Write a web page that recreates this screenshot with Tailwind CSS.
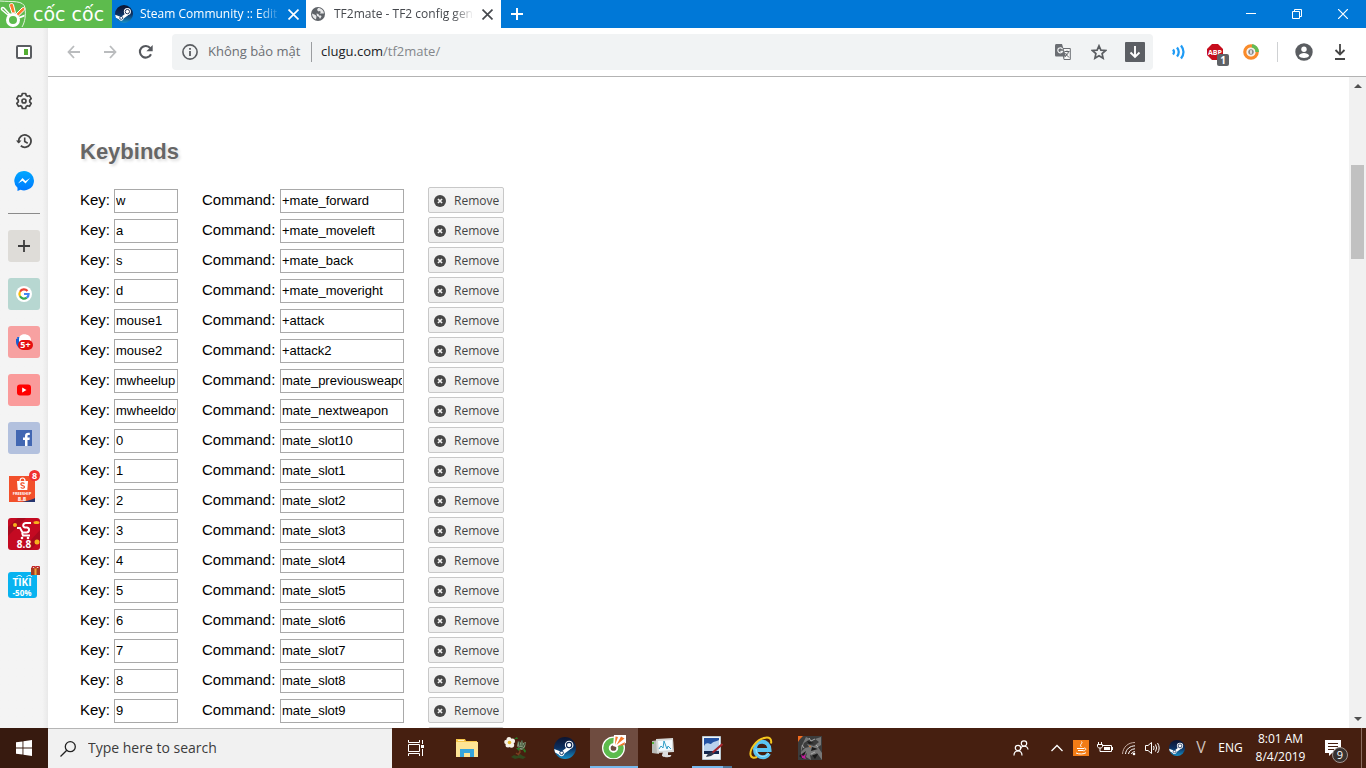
<!DOCTYPE html>
<html lang="en">
<head>
    <meta charset="UTF-8">
    <meta name="viewport" content="width=device-width, initial-scale=1.0">
    <title>TF2mate - TF2 config generator</title>
    <script src="https://cdn.jsdelivr.net/npm/@tailwindcss/browser@4"></script>
</head>
<body class="h-screen flex flex-col overflow-hidden bg-white font-['Open_Sans',sans-serif] text-xs">
    <!-- Shared icons -->
    <svg class="absolute w-0 h-0">
        <defs>
            <linearGradient id="steamBg" x1="0" y1="0" x2="0" y2="1">
                <stop offset="0" stop-color="#0c1430"/><stop offset=".5" stop-color="#0d2f5f"/><stop offset="1" stop-color="#1590c8"/>
            </linearGradient>
            <linearGradient id="msgBg" x1="0" y1="0" x2="0" y2="1">
                <stop offset="0" stop-color="#00a8ff"/><stop offset="1" stop-color="#0078ff"/>
            </linearGradient>
            <symbol id="steam" viewBox="0 0 24 24">
                <circle cx="12" cy="12" r="12" fill="url(#steamBg)"/>
                <path d="M.2 13 8 16l6.500-5 3 2.500-6 4.500a3.300 3.300 0 0 1-6.300 1L1.200 17z" fill="#fff"/>
                <circle cx="8.300" cy="17.200" r="2" fill="none" stroke="#0d2f5f"/>
                <circle cx="16.500" cy="8.800" r="4.700" fill="#fff"/>
                <circle cx="16.500" cy="8.800" r="2.900" fill="#fff" stroke="#0d2550" stroke-width="1.200"/>
            </symbol>
            <symbol id="close" viewBox="0 0 10 10">
                <path d="M.5.5l9 9M9.500.5l-9 9" stroke="currentColor" stroke-width="1.500"/>
            </symbol>
            <symbol id="remove" viewBox="0 0 12 12">
                <circle cx="6" cy="6" r="6" fill="#484848"/>
                <path d="M4 4l4 4M8 4L4 8" stroke="#f4f4f4" stroke-width="1.700"/>
            </symbol>
        </defs>
    </svg>

    <!-- Title bar -->
    <header class="h-7 shrink-0 flex bg-[#0078d7] text-white">
        <a href="#" class="w-28 shrink-0 flex items-center gap-[5px] bg-[#5dbb4d] overflow-hidden">
            <svg class="w-7 h-7 shrink-0" viewBox="0 0 28 28" fill="none">
                <path d="M0 1C12 2 24 0 25 8c1 7 0 14-3 19" stroke="#e4f5df" stroke-width="1"/>
                <circle cx="13" cy="20" r="5.500" stroke="#fff" stroke-width="3"/>
                <path d="M12 13 9.500 5.500C9 3.500 13 2.500 13.500 5L15.500 13z" fill="#ff7a2c" stroke="#fff" stroke-width="1"/>
                <path d="M16 14l6-6c2-1.500 4 .5 2 2.500L18.500 16z" fill="#ff7a2c" stroke="#fff" stroke-width="1"/>
                <path d="M18.500 17l6-2.500v2l-5 2z" fill="#fff"/>
                <path d="M8 15 2 10c-1.500-1.500.5-3.500 2-2l5.500 6z" stroke="#fff" stroke-width="1.500"/>
            </svg>
            <span class="font-['DejaVu_Sans',sans-serif] text-[19px] leading-7 whitespace-nowrap">cốc cốc</span>
        </a>
        <div class="w-[194px] flex items-center pl-[3px] pr-[3px]">
            <svg class="w-[18px] h-[18px] shrink-0"><use href="#steam"/></svg>
            <span class="ml-[7px] flex-1 overflow-hidden whitespace-nowrap text-[12px] mask-r-from-85% mask-r-to-100%">Steam Community :: Edit G</span>
            <button class="ml-1 p-1" aria-label="Close tab"><svg class="w-[11px] h-[11px]"><use href="#close"/></svg></button>
        </div>
        <div class="w-[195px] flex items-center pl-1 pr-1 bg-white text-[#45484d]">
            <svg class="w-4 h-4 shrink-0" viewBox="0 0 16 16">
                <circle cx="8" cy="8" r="7" fill="#5f6368"/>
                <path d="M2 7.500 5.500 9l1 1.500-.5 3C3.500 12.500 2 10.500 2 7.500zM8 2 7 4l1.500 1.500 1-.5 1.500 1-1.500 1.500h4.400C14 4.500 11.500 2 8 2zM6.500 7.500l2 .5.5 1.500h2l.5 1-1.500 2.500-1-2-2-1z" fill="#e6e7e8"/>
            </svg>
            <span class="ml-2 flex-1 overflow-hidden whitespace-nowrap text-[12px] mask-r-from-85% mask-r-to-100%">TF2mate - TF2 config gene</span>
            <button class="ml-1 p-1" aria-label="Close tab"><svg class="w-[11px] h-[11px]"><use href="#close"/></svg></button>
        </div>
        <button class="w-8 flex items-center justify-center" aria-label="New tab">
            <svg class="w-3 h-3" viewBox="0 0 12 12"><path d="M6 0v12M0 6h12" stroke="#fff" stroke-width="2"/></svg>
        </button>
        <div class="ml-auto flex">
            <button class="w-[46px] flex items-center justify-center" aria-label="Minimize">
                <svg class="w-[10px] h-[10px]" viewBox="0 0 10 10"><path d="M0 4.500h10" stroke="#fff"/></svg>
            </button>
            <button class="w-[46px] flex items-center justify-center" aria-label="Restore">
                <svg class="w-[10px] h-[10px]" viewBox="0 0 10 10" fill="none" stroke="#fff"><path d="M.5 2.500h7v7h-7zM2.500 2.500v-2h7v7h-2"/></svg>
            </button>
            <button class="w-[46px] flex items-center justify-center" aria-label="Close window">
                <svg class="w-[10px] h-[10px]" viewBox="0 0 10 10"><path d="M0 0l10 10M10 0L0 10" stroke="#fff" stroke-width="1.200"/></svg>
            </button>
        </div>
    </header>

    <div class="flex-1 min-h-0 flex">
        <!-- Sidebar -->
        <aside class="w-12 shrink-0 flex flex-col items-center bg-linear-to-r from-[#f4f4f4] from-88% to-[#e9e9e9]">
            <button class="h-12 flex items-center" aria-label="Toggle sidebar">
                <svg class="w-4 h-[14px]" viewBox="0 0 16 14"><rect x="1" y="1" width="14" height="12" rx="1" fill="#fff" stroke="#5a5d61" stroke-width="2"/><path d="M8 4h4v6H8z" fill="#53ad32"/></svg>
            </button>
            <button class="mt-[5px] h-10 flex items-center" aria-label="Settings">
                <svg class="w-[18px] h-[18px]" viewBox="0 0 18 18" fill="none" stroke="#444" stroke-width="1.700" stroke-linejoin="round"><path d="M7.300 1.500h3.400l.5 2 1.300.8 2-.6 1.700 3-1.500 1.500v1.600l1.500 1.500-1.700 3-2-.6-1.300.8-.5 2H7.300l-.5-2-1.300-.8-2 .6-1.700-3 1.500-1.500V8.200L1.800 6.700l1.700-3 2 .6 1.300-.8z"/><circle cx="9" cy="9" r="2"/></svg>
            </button>
            <button class="h-10 flex items-center" aria-label="History">
                <svg class="w-4 h-4" viewBox="0 0 16 16" fill="none" stroke="#444" stroke-width="1.800"><path d="M2.600 9.500V8a6.200 6.200 0 1 1 2.200 4.800"/><path d="M0 7.500h5.500L2.700 10.500z" fill="#444" stroke="none"/><path d="M8.700 4.500v4l3 1.700" stroke-width="1.600"/></svg>
            </button>
            <button class="h-10 flex items-center" aria-label="Messenger">
                <svg class="w-5 h-5" viewBox="0 0 20 20"><path d="M10 0a10 9.700 0 1 1-3.500 18.800L3.500 20v-3.200A9.800 9.700 0 0 1 10 0z" fill="url(#msgBg)"/><path d="M4 12.500 8.500 7l3 3L16 7l-4.500 5.500-3-2.800z" fill="#fff"/></svg>
            </button>
            <hr class="mt-3 w-8 border-0 h-px bg-[#8b8b8b]">
            <div class="mt-4 flex flex-col items-center gap-4">
                <button class="w-8 h-8 rounded-[3px] bg-[#dedcd8] flex items-center justify-center" aria-label="Add site">
                    <svg class="w-3 h-3" viewBox="0 0 12 12"><path d="M6 0v12M0 6h12" stroke="#3c3c3c" stroke-width="1.800"/></svg>
                </button>
                <a href="#" class="w-8 h-8 rounded-[3px] bg-[#b7d7d1] flex items-center justify-center" aria-label="Google">
                    <svg class="w-4 h-4" viewBox="0 0 16 16" fill="none" stroke-width="2.200"><circle cx="8" cy="8" r="8" fill="#fff"/><path d="M11.500 5A4.600 4.600 0 0 0 4 5.700" stroke="#ea4335"/><path d="M4 5.700a4.600 4.600 0 0 0 0 4.600" stroke="#fbbc05"/><path d="M4 10.300a4.600 4.600 0 0 0 6.800 1.400" stroke="#34a853"/><path d="M10.800 11.700A4.600 4.600 0 0 0 12.600 8H8" stroke="#4285f4"/></svg>
                </a>
                <a href="#" class="relative w-8 h-8 rounded-[3px] bg-[#f7a1a1] flex items-center justify-center" aria-label="News">
                    <svg class="w-4 h-4" viewBox="0 0 16 16"><path d="M1 3h7v10H4z" fill="#1769e0"/><path d="M3 5c0-7 12-6 12 1v3H3z" fill="#fff"/><path d="M0 5l3-1v10C1 12 0 10 0 8z" fill="#1760d0"/></svg>
                    <span class="absolute left-[10px] top-[14px] w-[15px] h-[10px] rounded-full bg-[#e60f0f] text-white text-[9px] leading-[10px] font-bold text-center">5+</span>
                </a>
                <a href="#" class="w-8 h-8 rounded-[3px] bg-[#fa9b9b] flex items-center justify-center" aria-label="YouTube">
                    <svg class="w-4 h-4" viewBox="0 0 16 16"><rect x="1" y="2.500" width="14" height="11" rx="3" fill="#f00"/><path d="M6.200 5.500v5L10.500 8z" fill="#fff"/></svg>
                </a>
                <a href="#" class="w-8 h-8 rounded-[3px] bg-[#b3c1de] flex items-center justify-center" aria-label="Facebook">
                    <svg class="w-4 h-4" viewBox="0 0 16 16"><path d="M0 0h16v16H0z" fill="#4267b2"/><path d="M9 16V10H7V7.500h2V6c0-2.200 1.200-3.300 3.200-3.300l1.600.1V5h-1.100C11.700 5 11.500 5.500 11.500 6.300v1.200h2.300l-.3 2.500h-2v6z" fill="#fff"/></svg>
                </a>
                <a href="#" class="relative w-8 h-8 flex flex-col items-center" aria-label="Shopee">
                    <svg class="w-8 h-8" viewBox="0 0 32 32"><path d="M1 6h26v26H1z" fill="#f2502b"/><path d="M14 32c6-1 11-3 13-4v4z" fill="#26366f"/><path d="M9 11h11l-.7 9h-9.600z" fill="#fff"/><path d="M12 11c0-4 5-4 5 0" fill="none" stroke="#fff" stroke-width="1.200"/><path d="M16.500 13.500c-1.500-1.300-4-.6-3.600 1 .3 1.300 3.400.8 3.600 2.300.2 1.500-2.300 2-3.800.6" fill="none" stroke="#f2502b" stroke-width="1.200"/>
                        <text x="14" y="24.500" font-size="4" font-weight="bold" text-anchor="middle" fill="#fff">FREESHIP</text>
                        <text x="14" y="30.500" font-size="6" font-weight="bold" text-anchor="middle" fill="#fff">8.8</text></svg>
                    <span class="absolute right-0 top-0 w-[11px] h-[11px] rounded-full bg-[#f03030] text-white text-[9px] leading-[11px] font-bold text-center">8</span>
                </a>
                <a href="#" class="w-8 h-8" aria-label="Sendo">
                    <svg class="w-8 h-8" viewBox="0 0 32 32"><rect width="32" height="32" rx="3" fill="#c40a22"/><path d="M0 9 10 0h8L0 18zM32 12v10L22 32h-8z" fill="#a80a1e"/><path d="M23 5h-5c-3 0-4 4-1 4.500h2c3 .5 2.500 5-.5 5h-4L12 10H9M14 15l1 2.500h7" fill="none" stroke="#fff" stroke-width="2"/><circle cx="14" cy="20" r="1.300" fill="#fff"/><circle cx="20" cy="20" r="1.300" fill="#fff"/><circle cx="7" cy="7" r="2" fill="#f7b21c"/><ellipse cx="28.500" cy="4.500" rx="3" ry="1.500" fill="#f7b21c"/><circle cx="29" cy="24" r="2.500" fill="#f7b21c"/>
                        <text x="16" y="30" font-size="10" font-weight="bold" text-anchor="middle" fill="#fff">8.8</text></svg>
                </a>
                <a href="#" class="w-8 h-9" aria-label="Tiki">
                    <svg class="w-8 h-9" viewBox="0 0 32 36"><rect y="6" width="29" height="26" rx="3" fill="#08b3f0"/><path d="M9 11c0-2 4-2 5 0M19 11c0-2 4-2 5 0" fill="none" stroke="#fff"/><path d="M23 2h9v7h-9z" fill="#a63c22"/><path d="M26.500 1h2v8h-2z" fill="#e8a83c"/><path d="M24 2.500c0-3 3-3 3.500 0 .5-3 4-3 4 0" fill="none" stroke="#c32626" stroke-width="1.400"/>
                        <text x="14" y="20" font-size="10" font-weight="bold" text-anchor="middle" fill="#fff">TIKI</text>
                        <text x="14" y="30" font-size="8" font-weight="bold" text-anchor="middle" fill="#fff">-50%</text></svg>
                </a>
            </div>
        </aside>

        <div class="flex-1 min-w-0 flex flex-col">
            <!-- Toolbar -->
            <div class="h-[49px] shrink-0 flex items-center px-2 border-b border-[#b3b3b3]">
                <button class="w-9 flex justify-center" aria-label="Back">
                    <svg class="w-4 h-4" viewBox="0 0 16 16" fill="none" stroke="#babcbe" stroke-width="1.800"><path d="M14 8H3M8 2 2.500 8 8 14"/></svg>
                </button>
                <button class="w-9 flex justify-center" aria-label="Forward">
                    <svg class="w-4 h-4" viewBox="0 0 16 16" fill="none" stroke="#babcbe" stroke-width="1.800"><path d="M2 8h11M8 2l5.500 6L8 14"/></svg>
                </button>
                <button class="w-9 flex justify-center" aria-label="Reload">
                    <svg class="w-4 h-4" viewBox="0 0 16 16"><path d="M13 10.200A5.800 5.800 0 1 1 12.300 4.200" fill="none" stroke="#55585d" stroke-width="2.100"/><path d="M14.700 1v6.300H8.400z" fill="#55585d"/></svg>
                </button>
                <div class="ml-2 mr-2 flex-1 h-9 flex items-center rounded bg-[#f1f3f4]">
                    <svg class="ml-[10px] w-4 h-4" viewBox="0 0 16 16"><circle cx="8" cy="8" r="7.100" fill="none" stroke="#5a5d61" stroke-width="1.600"/><path d="M7.100 7h1.800v5H7.100zM7.100 4h1.800v1.800H7.100z" fill="#5a5d61"/></svg>
                    <span class="ml-[10px] w-24 text-[13px] text-[#6b6e73] whitespace-nowrap">Không bảo mật</span>
                    <span class="ml-[7px] w-px h-5 bg-[#9b9da0]"></span>
                    <span class="ml-[9px] flex-1 text-[13px] text-[#202124]">clugu.com<span class="text-[#84878b]">/tf2mate/</span></span>
                    <button class="w-9 flex justify-center" aria-label="Translate">
                        <svg class="w-4 h-4" viewBox="0 0 16 16"><path d="M7 4.500h8.300v11H9z" fill="#f8f8f8" stroke="#6b6e73"/><path d="M0 1.500C0 .7.500 0 1.500 0H7l4 12.500H1.500C.5 12.500 0 12 0 11z" fill="#6b6e73"/><path d="M7.600 5.300A2.500 2.500 0 1 0 7.600 7.300H5.400" fill="none" stroke="#f1f3f4" stroke-width="1.200"/><path d="M9.500 7.500h5M12 6.500v1M13.500 7.500c-.5 2.500-2 4-4 5.500M10.500 9c1 2 2 3 3.500 4.500" fill="none" stroke="#5f6368"/></svg>
                    </button>
                    <button class="w-9 flex justify-center" aria-label="Bookmark">
                        <svg class="w-4 h-4" viewBox="0 0 16 16"><path d="M8 1.800l1.900 4.300 4.700.4-3.500 3.100 1 4.600L8 11.800l-4.100 2.400 1-4.600L1.400 6.500l4.700-.4z" fill="none" stroke="#5a5d61" stroke-width="1.700"/></svg>
                    </button>
                    <button class="w-9 flex justify-center" aria-label="Download">
                        <svg class="w-5 h-5" viewBox="0 0 20 20"><rect width="20" height="20" rx="1" fill="#5c5f64"/><path d="M10 4v11M5.500 10.500 10 15l4.500-4.500" fill="none" stroke="#fff" stroke-width="1.900"/></svg>
                    </button>
                </div>
                <button class="w-9 flex justify-center" aria-label="Sound">
                    <svg class="w-4 h-4" viewBox="0 0 16 16" fill="none" stroke="#1f9bf5" stroke-width="2.200"><path d="M2 5.500q2 2.500 0 5M6 3.500q3.500 4.500 0 9M10 1.500q5 6.500 0 13"/></svg>
                </button>
                <button class="relative w-9 flex justify-center" aria-label="Adblock">
                    <svg class="w-4 h-4" viewBox="0 0 16 16"><path d="M5 0h6l5 5v6l-5 5H5l-5-5V5z" fill="#c70d1c"/><text x="8" y="11" font-size="7" font-weight="bold" text-anchor="middle" fill="#fff">ABP</text></svg>
                    <span class="absolute left-5 top-[10px] w-3 h-3 rounded-xs bg-[#5f6266] text-white text-[10px] leading-3 font-bold text-center">1</span>
                </button>
                <button class="w-9 flex justify-center" aria-label="Savior">
                    <svg class="w-4 h-4" viewBox="0 0 16 16" fill="none"><circle cx="8" cy="8" r="6.200" stroke="#f98b2b" stroke-width="3.200"/><path d="M9 1.800A6.200 6.200 0 0 1 14.200 8" stroke="#62bb55" stroke-width="3.600"/><circle cx="8" cy="8" r="3.400" fill="#8a8a8a" stroke="#fff" stroke-width="1"/><path d="M8 6.200v3.600" stroke="#fff" stroke-width="1.400"/></svg>
                </button>
                <span class="ml-2 mr-2 w-px h-5 bg-[#cfd1d3]"></span>
                <button class="w-9 flex justify-center" aria-label="Profile">
                    <svg class="w-[18px] h-[18px]" viewBox="0 0 18 18"><circle cx="9" cy="9" r="8.700" fill="#5a5d61"/><circle cx="9" cy="6.200" r="2.700" fill="#fff"/><path d="M3.800 12.700c1.500-3.500 8.900-3.500 10.400 0C12.500 15.700 5.500 15.700 3.800 12.700z" fill="#fff"/></svg>
                </button>
                <button class="w-9 flex justify-center" aria-label="Downloads">
                    <svg class="w-4 h-4" viewBox="0 0 16 16" fill="none" stroke="#454545" stroke-width="1.800"><path d="M8 0v10M3.500 6 8 10.500 12.500 6M3 15h10"/></svg>
                </button>
            </div>

            <!-- Page -->
            <div class="flex-1 min-h-0 flex">
                <main class="flex-1 overflow-hidden pl-8 pt-[59px] font-['Liberation_Sans',Arial,sans-serif]">
                    <h2 class="text-[22px] leading-8 font-bold text-[#666] text-shadow-[2px_2px_3px_#ddd]">Keybinds</h2>
                    <div id="keybinds" class="mt-[19px] flex flex-col gap-1"></div>
                </main>
                <div class="w-[17px] shrink-0 flex flex-col items-center justify-between bg-[#f1f1f1] py-[6px]">
                    <svg class="w-2 h-[6px]" viewBox="0 0 8 6"><path d="M0 5 4 1l4 4z" fill="#505050"/></svg>
                    <div class="flex-1 w-full pt-[76px] px-[2px]"><div class="h-[94px] bg-[#c1c1c1]"></div></div>
                    <svg class="w-2 h-[6px]" viewBox="0 0 8 6"><path d="M0 1l4 4 4-4z" fill="#505050"/></svg>
                </div>
            </div>
        </div>
    </div>

    <!-- Taskbar -->
    <footer class="h-10 shrink-0 flex bg-[#461f10] text-white">
        <button class="w-12 flex items-center justify-center bg-[#371a0f]" aria-label="Start">
            <svg class="w-4 h-4" viewBox="0 0 16 16" fill="#fff"><path d="M0 2.300 6.500 1.400v6.100H0zM7.400 1.200 16 0v7.500H7.400zM0 8.500h6.500v6.100L0 13.700zM7.400 8.500H16V16l-8.600-1.200z"/></svg>
        </button>
        <label class="w-[344px] flex items-center pl-3 bg-[#f1f1f1] border-t border-[#b5b5b5]">
            <svg class="w-4 h-4 shrink-0" viewBox="0 0 16 16" fill="none" stroke="#222" stroke-width="1.300"><circle cx="10.300" cy="5.700" r="5"/><path d="M6.800 9.300.5 15.500"/></svg>
            <input type="text" aria-label="Search" placeholder="Type here to search" class="ml-3 flex-1 outline-none text-[14px] placeholder:text-[#3c3c3c]">
        </label>
        <button class="w-12 flex items-center justify-center" aria-label="Task view">
            <svg class="w-4 h-4" viewBox="0 0 16 16" fill="none" stroke="#fff"><path d="M.5 4.500h11v7H.5zM.5 0v2.500h11V0M.5 16v-2.500h11V16M14.500 0v4M14.500 9v7"/><path d="M13 5h3v3h-3z" fill="#fff" stroke="none"/></svg>
        </button>
        <div class="ml-[3px] flex gap-px">
            <button class="w-12 flex items-center justify-center" aria-label="File Explorer">
                <svg class="w-6 h-6" viewBox="0 0 24 24"><path d="M1 3h9l1 2h11v16H1z" fill="#f7c64b"/><path d="M1 6h22v15H1z" fill="#fde495"/><path d="M3 4h6v1H3z" fill="#fff2c0"/><path d="M5 13h14v8h-4v-4H9v4H5z" fill="#35a5dc"/></svg>
            </button>
            <button class="w-12 flex items-center justify-center" aria-label="Plants vs. Zombies">
                <svg class="w-6 h-6" viewBox="0 0 24 24"><path d="M7 21l3-2 3 1 3-2 3 2 3 1-3 2-4-1-4 1z" fill="#31491f"/><path d="M15 11l1 5-2 3M12 17l3 2" stroke="#7b3d20" stroke-width="1.500" fill="none"/><path d="M14 5l2 2 2-3 1 3 3-1-1 5-3 3-3-1-2-3z" fill="#839777"/><path d="M15 5l1 5M18 4v6M21 7l-2 4M14 11l5 1" stroke="#384832"/><path d="M10 3l3-2 1 2zM12 12h4l-1 3zM20 12l2 3-1 2-2-3z" fill="#267c24"/><g fill="#f5f1e7"><circle cx="5" cy="3.500" r="2.500"/><circle cx="8.500" cy="5" r="2.500"/><circle cx="7.500" cy="9" r="2.700"/><circle cx="4" cy="9" r="2.500"/><circle cx="2.500" cy="6" r="2.300"/></g><circle cx="5.500" cy="6.500" r="1.800" fill="#e7b92a"/></svg>
            </button>
            <button class="w-12 flex items-center justify-center" aria-label="Steam">
                <svg class="w-[22px] h-[22px]"><use href="#steam"/></svg>
            </button>
            <button class="w-12 flex items-center justify-center bg-[#6f4c40] border-b-2 border-[#76b9ed]" aria-label="Browser">
                <svg class="w-6 h-6" viewBox="0 0 24 24" fill="none"><circle cx="11.500" cy="13" r="7.500" stroke="#fff" stroke-width="8"/><circle cx="11.500" cy="13" r="7.500" stroke="#5dbb4d" stroke-width="5.500"/><circle cx="11.500" cy="13" r="3.500" stroke="#fff" stroke-width="1.300"/><path d="M11 11 12 0h12v8l-10 4z" fill="#fff"/><path d="M13 10 13.500 1.500 16 2zM15 11.500l8-4.500-1 3z" fill="#f47729"/><path d="M14.500 10 19 1.500l3.500 2z" fill="#f47729"/></svg>
            </button>
            <button class="w-12 flex items-center justify-center" aria-label="Resource Monitor">
                <svg class="w-6 h-6" viewBox="0 0 24 24"><path d="M1 5l7-1v14l-7-1z" fill="#b8bbb7"/><path d="M1 6h2v2H1z" fill="#54b43b"/><path d="M5 3l17-1 1 14-17 1z" fill="#d7d9d8"/><path d="M7 5l14-1v10L8 15z" fill="#f5fbff"/><path d="M8 13l2-3 2 2 1-7 3 8 1-3 3 3" fill="none" stroke="#35a0c8"/><path d="M12 16h5v3h3c2 3-10 3-9 0z" fill="#ddd"/></svg>
            </button>
            <button class="relative w-12 flex items-center justify-center" aria-label="Paint tool">
                <svg class="w-6 h-6" viewBox="0 0 24 24"><path d="M2.500.5h18v23h-18z" fill="#f1f4f7" stroke="#b9c5ce"/><path d="M4 2h15v16H4z" fill="#2452a3"/><path d="M4 10c3-6 6 0 8-3 2-2 4-1 7-3v11H4z" fill="#b9d2ee"/><path d="M4 15h15v3H4z" fill="#14284f"/><path d="M22.500 8 11 18" stroke="#a4242b" stroke-width="2.200"/><path d="M12 16l2 2-3 2-5 1c1-3 3-4 6-5z" fill="#303a4e"/></svg>
                <span class="absolute bottom-0 left-1 w-[31px] h-[2px] bg-[#76b9ed]"></span>
                <span class="absolute bottom-0 right-1 w-[9px] h-[2px] bg-[#4c7698]"></span>
            </button>
            <button class="w-12 flex items-center justify-center" aria-label="Internet Explorer">
                <svg class="w-6 h-6" viewBox="0 0 24 24" fill="none"><path d="M20 17.500c-4 6.500-14 4-14-4.500 0-9 14-10.500 14.500 1H7" stroke="#5bc5f2" stroke-width="4"/><path d="M20 17c-4 6-13 4-13-4" stroke="#a8e7fc" stroke-width="1"/><path d="M22 7.500C24-2 11 1 5 9c-6 8-4 15 3 12" stroke="#f6c71d" stroke-width="2"/></svg>
            </button>
            <button class="w-12 flex items-center justify-center" aria-label="Game">
                <svg class="w-6 h-6" viewBox="0 0 24 24"><path d="M0 0h24v24H0z" fill="#3c3c3c"/><path d="M0 0h5L2 3 0 6z" fill="#f36b1e"/><path d="M8 1l4 2-6 4-3 9 4-4 4-1-2-3 7 2 5-4-4-3 6-2v8l-3 2 4 6v7l-5-7-4 3-3-1 1 5-5-3 1-4-6 5V11z" fill="#777"/><path d="M9 5l7 2-5 1zM14 11l6 2-7 2zM1 20l7-5-3 8zM14 19l6-1-3 5z" fill="#1a1a1a"/><path d="M11 2l2 3 4-2M4 9l2 3M18 9l2 2M17 16l-4 2" stroke="#aaa" fill="none"/><path d="M11 10l2 1" stroke="#e07a28"/><path d="M3 18l2 2 3-2-1 3 1 2-4-1z" fill="#c01c9a"/></svg>
            </button>
        </div>

        <!-- Tray -->
        <div class="ml-auto flex items-center">
            <button class="w-12 flex justify-center" aria-label="People">
                <svg class="w-4 h-4" viewBox="0 0 16 16" fill="none" stroke="#fff" stroke-width="1.200"><circle cx="11" cy="3.500" r="2.700"/><path d="M7.500 9c.5-3.500 7-4 7.500.5"/><circle cx="5" cy="8" r="2.700"/><path d="M1 15.500c0-6 8-6 8 0"/></svg>
            </button>
            <button class="w-6 flex justify-center" aria-label="Show hidden icons">
                <svg class="w-3 h-3" viewBox="0 0 12 12"><path d="M.5 9 6 3.500 11.500 9" fill="none" stroke="#fff" stroke-width="1.300"/></svg>
            </button>
            <button class="w-6 flex justify-center" aria-label="Java">
                <svg class="w-4 h-4" viewBox="0 0 16 16" fill="none" stroke="#fff"><path d="M0 0h16v16H0z" fill="#f27c16" stroke="none"/><path d="M8.500 1.500c2 2-3 3 0 5.500M4 8.500h7M5 10.500h5.500M3 13c3 1.500 8 1.200 10-.3M11 8c3 0 2 2.500-.5 3"/></svg>
            </button>
            <button class="w-6 flex justify-center" aria-label="Battery">
                <svg class="w-4 h-4" viewBox="0 0 16 16" fill="none" stroke="#fff"><path d="M6 5.500h8.500v6h-9"/><path d="M7 7h6v3H7zM15 7h1v3h-1z" fill="#fff" stroke="none"/><path d="M1.500 2v2.500M4.500 2v2.500M.5 4.500h5v2c0 2-5 2-5 0zM3 8v3.500h3"/></svg>
            </button>
            <button class="w-6 flex justify-center" aria-label="Network">
                <svg class="w-4 h-4" viewBox="0 0 16 16" fill="none" stroke="#fff"><path d="M1.500 14C2 7 7 2.500 14 2.500" stroke="#c4aaa0"/><path d="M4.500 14C5 9 9 6 14 5.800M7.500 14c.4-3 3-5 6.500-5.200M10.500 14c.3-1.500 1.500-2.300 3.500-2.300"/><circle cx="13" cy="14" r="1.300" fill="#fff" stroke="none"/></svg>
            </button>
            <button class="w-6 flex justify-center" aria-label="Volume">
                <svg class="w-4 h-4" viewBox="0 0 16 16" fill="none" stroke="#fff"><path d="M.5 5.500H3l3.500-3v11L3 10.500H.5z"/><path d="M8.500 6q1.200 2 0 4M10.500 4.500q2.200 3.500 0 7M12.500 3q3.300 5 0 10"/></svg>
            </button>
            <button class="w-6 flex justify-center" aria-label="Steam"><svg class="w-4 h-4"><use href="#steam"/></svg></button>
            <button class="w-6 text-[16px] text-[#d0c1bb]">V</button>
            <button class="w-[35px] text-[12px]">ENG</button>
            <button class="w-[65px] text-[12px] leading-[18px]">8:01 AM<br>8/4/2019</button>
            <button class="relative w-12 h-10 pl-3 flex items-center" aria-label="Notifications">
                <svg class="w-4 h-4" viewBox="0 0 16 16"><path d="M0 0h16v13H7l-3 3v-3H0z" fill="#fff"/><path d="M3 3.500h10M3 6.500h10M3 9.500h6" stroke="#461f10"/></svg>
                <span class="absolute left-[19px] top-[19px] w-4 h-4 rounded-full bg-[#38322f] border border-[#a09590] text-[11px] leading-[14px] text-center">9</span>
            </button>
            <span class="mr-1 w-px h-10 bg-[#8b6c61]"></span>
        </div>
    </footer>

    <script>
        // Default binds
        const binds = [
            ['w', '+mate_forward'],
            ['a', '+mate_moveleft'],
            ['s', '+mate_back'],
            ['d', '+mate_moveright'],
            ['mouse1', '+attack'],
            ['mouse2', '+attack2'],
            ['mwheelup', 'mate_previousweapon'],
            ['mwheeldown', 'mate_nextweapon'],
            ['0', 'mate_slot10'],
            ['1', 'mate_slot1'],
            ['2', 'mate_slot2'],
            ['3', 'mate_slot3'],
            ['4', 'mate_slot4'],
            ['5', 'mate_slot5'],
            ['6', 'mate_slot6'],
            ['7', 'mate_slot7'],
            ['8', 'mate_slot8'],
            ['9', 'mate_slot9'],
            ['', '']
        ];

        // Render one row per bind
        document.getElementById('keybinds').innerHTML = binds.map(([key, command], i) => `
            <div class="h-[26px] shrink-0 flex items-end text-[15px]">
                <label for="key${i}" class="w-[34px] leading-[26px]">Key:</label>
                <input id="key${i}" type="text" value="${key}" class="w-16 h-6 px-px pb-[2px] border border-[#a9a9a9] text-[13px]">
                <label for="command${i}" class="ml-6 w-[78px] leading-[26px]">Command:</label>
                <input id="command${i}" type="text" value="${command}" class="w-[124px] h-6 px-px pb-[2px] border border-[#a9a9a9] text-[13px]">
                <button class="ml-6 w-[76px] h-[26px] flex items-center gap-2 pl-[5px] pt-[2px] rounded-xs border border-[#c8c8c8] bg-linear-to-b from-[#f7f7f7] to-[#eee] font-['Open_Sans',sans-serif] text-[12px] text-[#444]">
                    <svg class="w-3 h-3 shrink-0"><use href="#remove"/></svg>Remove
                </button>
            </div>
        `).join('');
    </script>
</body>
</html>
